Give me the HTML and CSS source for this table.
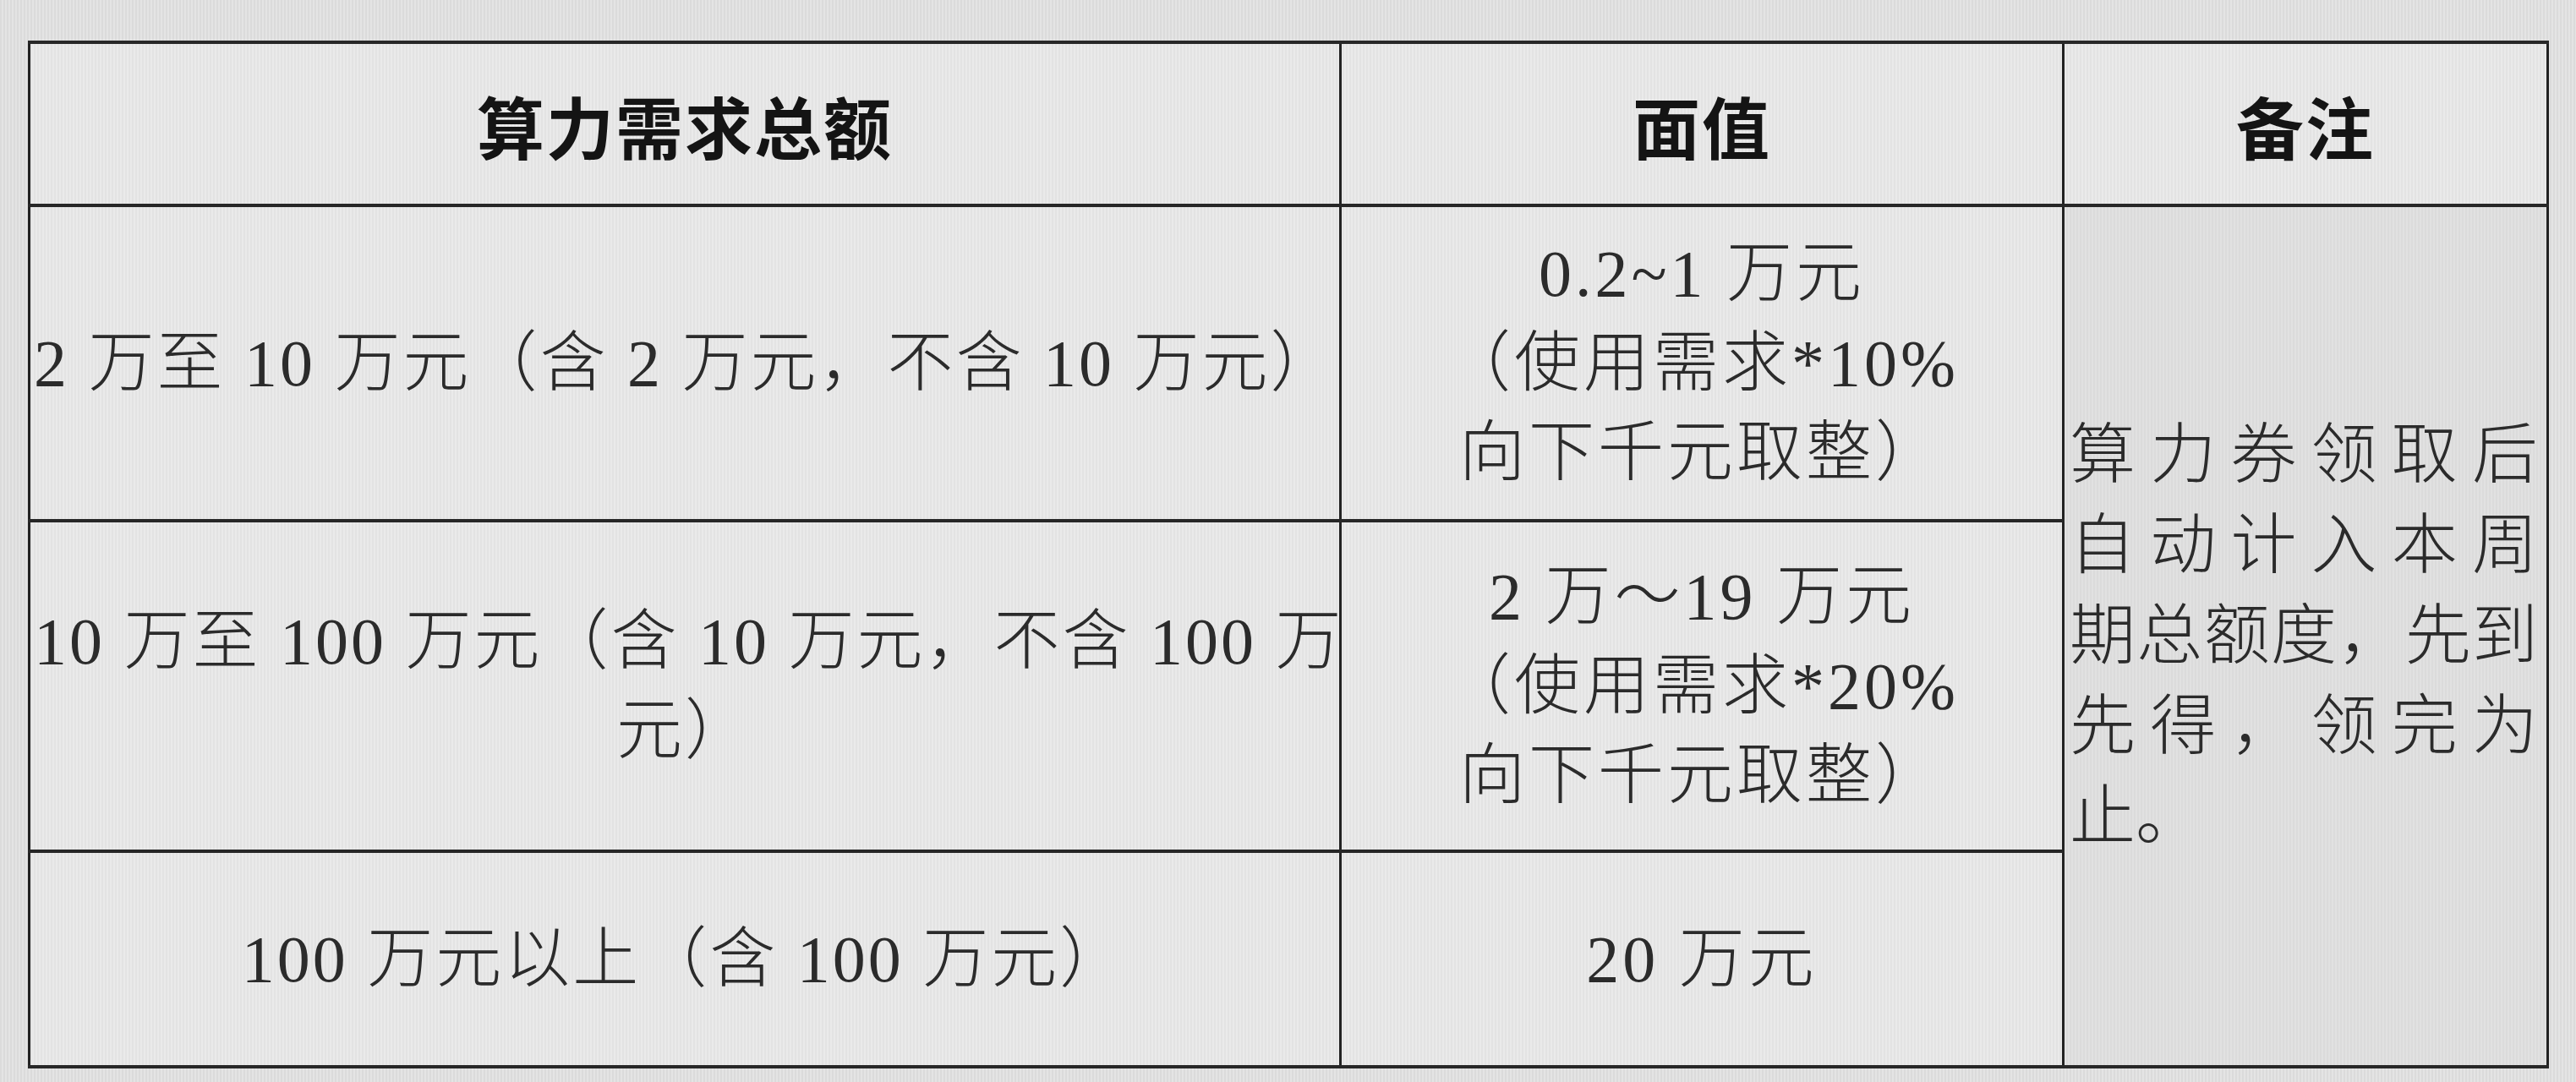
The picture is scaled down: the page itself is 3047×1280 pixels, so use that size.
FILE: index.html
```html
<!DOCTYPE html>
<html lang="zh-CN">
<head>
<meta charset="utf-8">
<title>算力券面值表</title>
<link rel="stylesheet" href="styles.css">
</head>
<body>
<table class="quota">
  <colgroup>
    <col class="c1">
    <col class="c2">
    <col class="c3">
  </colgroup>
  <thead>
    <tr class="head">
      <th>算力需求总额</th>
      <th>面值</th>
      <th>备注</th>
    </tr>
  </thead>
  <tbody>
    <tr class="r1">
      <td class="amt"><div class="ln">2 万至 10 万元（含 2 万元，不含 10 万元）</div></td>
      <td class="val">
        <div class="ln">0.2~1 万元</div>
        <div class="ln">（使用需求*10%</div>
        <div class="ln">向下千元取整）</div>
      </td>
      <td class="note" rowspan="3">
        <div class="jl">算力券领取后</div>
        <div class="jl">自动计入本周</div>
        <div class="jl">期总额度，先到</div>
        <div class="jl">先得，领完为</div>
        <div class="last">止。</div>
      </td>
    </tr>
    <tr class="r2">
      <td class="amt">
        <div class="ln">10 万至 100 万元（含 10 万元，不含 100 万</div>
        <div class="ln">元）</div>
      </td>
      <td class="val">
        <div class="ln">2 万～19 万元</div>
        <div class="ln">（使用需求*20%</div>
        <div class="ln">向下千元取整）</div>
      </td>
    </tr>
    <tr class="r3">
      <td class="amt"><div class="ln">100 万元以上（含 100 万元）</div></td>
      <td class="val"><div class="ln">20 万元</div></td>
    </tr>
  </tbody>
</table>
</body>
</html>
```

FILE: styles.css
```css
html, body {
  margin: 0;
  padding: 0;
}

body {
  width: 3047px;
  height: 1280px;
  overflow: hidden;
  background-color: #e3e3e3;
  background-image: repeating-linear-gradient(90deg, rgba(0,0,0,0.035) 0 2px, rgba(255,255,255,0.05) 2px 4px);
  font-family: "Liberation Serif", "Noto Sans CJK SC", serif;
  color: #2b2b2b;
}

.quota {
  margin: 48px 0 0 33px;
  width: 2979px;
  table-layout: fixed;
  border-collapse: collapse;
  background-color: rgba(255,255,255,0.22);
}

.c1 { width: 1551px; }
.c2 { width: 855px; }
.c3 { width: 573px; }

.quota th,
.quota td {
  border-top: 4px solid #272727;
  border-bottom: 4px solid #272727;
  border-left: 3px solid #222222;
  border-right: 3px solid #222222;
  padding: 0 4px;
  vertical-align: middle;
  text-align: center;
}

.head { height: 193px; }
.r1 { height: 373px; }
.r2 { height: 391px; }
.r3 { height: 255px; }

.quota th {
  font-family: "Noto Sans CJK SC", sans-serif;
  font-weight: 700;
  font-size: 80px;
  letter-spacing: 2px;
  color: #141414;
  line-height: 1.2;
}

.amt,
.val {
  font-size: 78px;
  font-weight: 300;
  line-height: 106px;
}

.amt {
  letter-spacing: 3px;
}

.val {
  letter-spacing: 4px;
}

.ln {
  white-space: nowrap;
}

.note {
  background-color: rgba(0,0,0,0.035);
  font-size: 78px;
  font-weight: 300;
  line-height: 107px;
  padding: 0 10px 0 6px !important;
  text-align: left !important;
}

.jl {
  text-align: justify;
  text-align-last: justify;
}

.last {
  text-align: left;
}
```
